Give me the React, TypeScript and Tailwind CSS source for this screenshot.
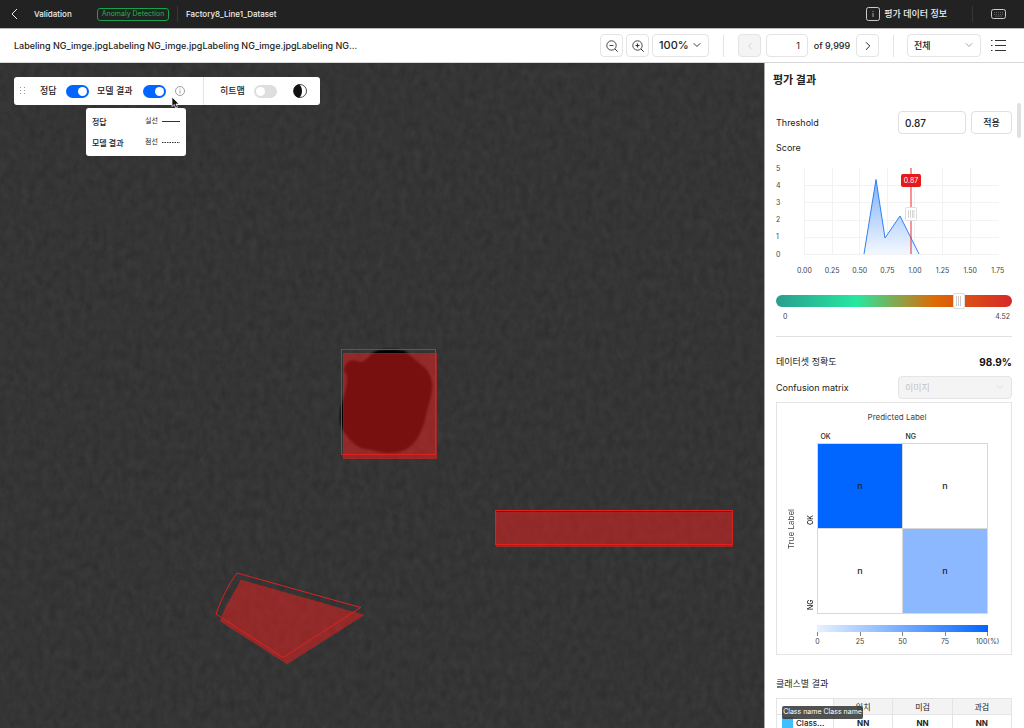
import { useState } from 'react';
import type { ReactNode } from 'react';
import { ChevronDown, ChevronLeft, ChevronRight } from 'lucide-react';

const xTicks = ['0.00', '0.25', '0.50', '0.75', '1.00', '1.25', '1.50', '1.75'];
const yTicks = [5, 4, 3, 2, 1, 0];
const scaleTicks = ['0', '25', '50', '75', '100(%)'];

const matrixRows = [
  { label: 'OK', cells: ['bg-[#0066ff]', 'bg-white'] },
  { label: 'NG', cells: ['bg-white', 'bg-[#8cb8ff]'] }
];

const classRows = [
  { name: 'Class name Class name', short: 'Class...', values: ['NN', 'NN', 'NN'] }
];

function Toggle({ id, checked, onChange }: { id: string; checked: boolean; onChange: (v: boolean) => void }) {
  return (
    <input
      id={id}
      type="checkbox"
      role="switch"
      checked={checked}
      onChange={(e) => onChange(e.target.checked)}
      className="flex h-[13px] w-[23px] shrink-0 appearance-none items-center justify-start rounded-full bg-[#dedede] px-0.5 before:block before:h-[9px] before:w-[9px] before:rounded-full before:bg-white checked:justify-end checked:bg-[#0066ff]"
    />
  );
}

function SquareButton({ label, disabled, children }: { label: string; disabled?: boolean; children: ReactNode }) {
  return (
    <button
      aria-label={label}
      disabled={disabled}
      className="flex h-[23px] w-[23px] shrink-0 items-center justify-center rounded-sm border border-[#e4e4e4] text-[#222] disabled:bg-[#f4f4f4] disabled:text-[#d0d0d0]"
    >
      {children}
    </button>
  );
}

function Magnifier({ plus }: { plus?: boolean }) {
  return (
    <svg width="12" height="12" viewBox="0 0 12 12" fill="none" stroke="#333">
      <circle cx="5.5" cy="5.5" r="4.7" strokeWidth="0.9" />
      <path d="M9 9l2.7 2.7" />
      <path d={plus ? 'M3.5 5.5h4M5.5 3.5v4' : 'M3.5 5.5h4'} strokeWidth={plus ? 1.2 : 0.9} />
    </svg>
  );
}

function TopBar() {
  return (
    <header className="flex h-7 shrink-0 items-center bg-[#222] text-[#eee]">
      <button aria-label="Back" className="ml-[9px] flex w-[11px] justify-center">
        <svg width="7" height="12" viewBox="0 0 7 12" fill="none" stroke="currentColor">
          <path d="M6 1 1 6l5 5" />
        </svg>
      </button>
      <h1 className="ml-[14px] w-[63px] text-[8px] font-medium">Validation</h1>
      <span className="flex h-[13px] w-[72px] items-center justify-center rounded-[3px] border border-[#16a34a] text-[7px] whitespace-nowrap text-[#1fb457]">
        Anomaly Detection
      </span>
      <span className="ml-2 h-4 w-px bg-[#363636]" />
      <span className="ml-2 text-[8px] font-medium">Factory8_Line1_Dataset</span>
      <button className="ml-auto flex items-center gap-1 text-[9px] font-medium">
        <svg width="14" height="14" viewBox="0 0 14 14" fill="none" stroke="#ccc">
          <rect x="0.5" y="0.5" width="13" height="13" rx="2" />
          <path d="M7 6v4M7 4v1" strokeWidth="0.8" />
        </svg>
        평가 데이터 정보
      </button>
      <span className="ml-[25px] h-4 w-px bg-[#363636]" />
      <button aria-label="Keyboard shortcuts" className="mr-[18px] ml-[18px]">
        <svg width="15" height="10" viewBox="0 0 15 10" fill="none" stroke="#ccc">
          <rect x="0.5" y="0.5" width="14" height="9" rx="2" />
          <path d="M3 3.5h9M3 5.5h9" strokeWidth="0.7" strokeDasharray="1 1" opacity="0.5" />
          <path d="M4 7.2h7" strokeWidth="0.6" opacity="0.4" />
        </svg>
      </button>
    </header>
  );
}

function FileBar() {
  return (
    <div className="flex h-[35px] shrink-0 items-center border-y border-t-[#bbb] border-b-[#d8d8d8] bg-white text-[9px] font-medium text-[#222]">
      <span className="ml-[14px] truncate">Labeling NG_imge.jpgLabeling NG_imge.jpgLabeling NG_imge.jpgLabeling NG...</span>
      <div className="ml-auto flex shrink-0 items-center">
        <div className="flex gap-[3px]">
          <SquareButton label="Zoom out">
            <Magnifier />
          </SquareButton>
          <SquareButton label="Zoom in">
            <Magnifier plus />
          </SquareButton>
          <div className="relative h-[23px] w-[57px]">
            <select aria-label="Zoom level" className="h-full w-full appearance-none rounded-sm border border-[#e4e4e4] pl-1.5 text-[11px]">
              <option>100%</option>
            </select>
            <ChevronDown size={12} strokeWidth={1.8} className="pointer-events-none absolute top-[5px] right-[6px]" />
          </div>
        </div>
        <span className="mx-[14px] h-[22px] w-px bg-[#e4e4e4]" />
        <div className="flex items-center gap-[5px]">
          <SquareButton label="Previous image" disabled>
            <ChevronLeft size={12} strokeWidth={1.7} />
          </SquareButton>
          <input aria-label="Image number" defaultValue="1" className="h-[23px] w-[42px] rounded-sm border border-[#e4e4e4] px-[7px] text-right font-normal" />
          <span className="w-[38px] text-center whitespace-nowrap">of 9,999</span>
          <SquareButton label="Next image">
            <ChevronRight size={14} strokeWidth={1.7} />
          </SquareButton>
        </div>
        <span className="mr-[13px] ml-[14px] h-[22px] w-px bg-[#e4e4e4]" />
        <div className="relative h-[23px] w-[74px]">
          <select aria-label="Filter" className="h-full w-full appearance-none rounded-sm border border-[#e4e4e4] pl-1.5">
            <option>전체</option>
          </select>
          <ChevronDown size={12} strokeWidth={1.3} className="pointer-events-none absolute top-[5px] right-[6px] text-[#777]" />
        </div>
        <button aria-label="Image list" className="mr-[18px] ml-[10px]">
          <svg width="15" height="11" viewBox="0 0 15 11" stroke="#333">
            <path d="M4 .5h11M4 5.5h11M4 10.5h11M0 .5h1.5M0 5.5h1.5M0 10.5h1.5" />
          </svg>
        </button>
      </div>
    </div>
  );
}

function Annotations() {
  return (
    <svg className="absolute inset-0 h-full w-full" viewBox="0 63 764 665" preserveAspectRatio="xMidYMid slice">
      <defs>
        <filter id="fabric" x="0" y="0" width="100%" height="100%" colorInterpolationFilters="sRGB">
          <feTurbulence type="fractalNoise" baseFrequency="0.14 0.1" numOctaves="3" seed="4" />
          <feColorMatrix values="0.05 0.03 0 0 0.166  0.05 0.03 0 0 0.166  0.05 0.03 0 0 0.166  0 0 0 0 1" />
        </filter>
        <filter id="soft">
          <feGaussianBlur stdDeviation="1" />
        </filter>
      </defs>
      <rect y="63" width="764" height="665" filter="url(#fabric)" />
      <path
        d="M349 361c5-2 10 1 13 1 6-3 9-10 17-12 8-1 17-1 26 1 7 6 13 11 19 16 6 6 9 14 8 22-1 10-4 17-6 27-3 11-6 20-13 28-6 6-14 9-24 9-10 0-17-4-25-4-8-2-13-8-18-14-6-6-7-20-5-28 2-10 7-21 6-32-5-4-3-10 2-14z"
        filter="url(#soft)"
      />
      <g fill="#f02020" fillOpacity="0.5" stroke="#e02020" strokeDasharray="1 1">
        <rect x="343.5" y="353.5" width="93" height="105" />
        <rect x="496.5" y="512.5" width="236" height="34" />
        <path d="M241 580 364 615 287 664 220 621 226 607z" strokeOpacity="0.6" />
      </g>
      <g fill="none" stroke="#e02020">
        <rect x="341.5" y="349.5" width="94" height="105" />
        <rect x="495.5" y="510.5" width="237" height="34" />
        <path d="M237 573 360.5 607.5 283 657.5 216 614Q224 591 237 573z" />
      </g>
    </svg>
  );
}

function LayerTools() {
  const [answer, setAnswer] = useState(true);
  const [model, setModel] = useState(true);
  const [heatmap, setHeatmap] = useState(false);

  return (
    <div className="absolute top-[14px] left-[14px] flex h-7 w-[306px] items-center rounded-[3px] bg-white text-[9px] font-medium text-[#222]">
      <svg width="5" height="8" viewBox="0 0 5 8" fill="#999" className="ml-1.5">
        <path d="M0 0h1v1H0zM4 0h1v1H4zM0 3h1v1H0zM4 3h1v1H4zM0 6h1v1H0zM4 6h1v1H4z" />
      </svg>
      <label htmlFor="answer" className="ml-[15px] w-[26px]">정답</label>
      <Toggle id="answer" checked={answer} onChange={setAnswer} />
      <label htmlFor="model" className="ml-2 w-[46px]">모델 결과</label>
      <Toggle id="model" checked={model} onChange={setModel} />
      <button aria-label="Line style info" className="ml-[9px]">
        <svg width="10" height="10" viewBox="0 0 10 10" fill="none" stroke="#888" strokeWidth="0.8">
          <circle cx="5" cy="5" r="4.5" />
          <path d="M5 4.3v3.2M5 2.5v1" />
        </svg>
      </button>
      <span className="ml-[18px] h-full w-px bg-[#e4e4e4]" />
      <label htmlFor="heatmap" className="ml-4 w-[34px]">히트맵</label>
      <Toggle id="heatmap" checked={heatmap} onChange={setHeatmap} />
      <button aria-label="Contrast" className="ml-4">
        <svg width="14" height="14" viewBox="0 0 14 14">
          <circle cx="7" cy="7" r="6.5" fill="#fff" stroke="#222" strokeWidth="0.8" />
          <path d="M6 0.2a7 7 0 0 0 0 13.600c4-3 4-10.600 0-13.600z" fill="#111" />
        </svg>
      </button>

      {/* Line style legend */}
      <dl className="absolute top-[31px] left-[72px] flex h-12 w-[100px] flex-col justify-around rounded-[3px] bg-white px-1.5 py-[3px] text-[8px]">
        <div className="flex items-center justify-between">
          <dt>정답</dt>
          <dd className="flex items-center gap-1 text-[7px] font-normal">
            실선
            <svg width="18" height="1" viewBox="0 0 18 1" stroke="#333">
              <path d="M0 .5h18" />
            </svg>
          </dd>
        </div>
        <div className="flex items-center justify-between">
          <dt>모델 결과</dt>
          <dd className="flex items-center gap-1 text-[7px] font-normal">
            점선
            <svg width="18" height="1" viewBox="0 0 18 1" stroke="#333">
              <path d="M0 .5h18" strokeDasharray="1.5 1" />
            </svg>
          </dd>
        </div>
      </dl>
      <svg width="9" height="13" viewBox="0 0 9 13" className="absolute top-[19px] left-[157px]">
        <path d="M1 1v9.5l2.3-2 1.4 3.5 1.8-.7L5 8h3z" fill="#111" stroke="#fff" strokeWidth="0.7" />
      </svg>
    </div>
  );
}

function ScoreChart() {
  return (
    <svg viewBox="0 0 236 116" className="mt-1.5 block w-full" fontSize="7" fill="#444">
      <defs>
        <linearGradient id="area" x1="0" y1="0" x2="0" y2="1">
          <stop offset="0" stopColor="#7fb0fb" />
          <stop offset="1" stopColor="#f3f8ff" />
        </linearGradient>
      </defs>
      <g stroke="#f2f2f2">
        {yTicks.slice(1).map((t) => (
          <path key={t} d={`M28 ${Math.round(92 - t * 17.2) + 0.5}H223`} />
        ))}
        {xTicks.slice(0, 7).map((t, i) => (
          <path key={t} d={`M${Math.round(28 + i * 27.6) + 0.5} 6V92`} />
        ))}
      </g>
      {yTicks.map((t) => (
        <text key={t} x="0" y={94.5 - t * 17.2}>{t}</text>
      ))}
      {xTicks.map((t, i) => (
        <text key={t} x={28.5 + i * 27.6} y="111" textAnchor="middle">{t}</text>
      ))}
      <path d="M88 92 100 17.5 109 76 124 54 143 92z" fill="url(#area)" />
      <path d="M88 92 100 17.5 109 76 124 54 143 92" fill="none" stroke="#2f80f5" />
      <path d="M135 6V92" stroke="#ea2a2a" />
      <rect x="125" y="12" width="20" height="13" rx="2" fill="#e61919" />
      <text x="135" y="21" fill="#fff" textAnchor="middle">0.87</text>
      <rect x="129.5" y="45.5" width="11" height="13" rx="1" fill="#fff" stroke="#ddd" />
      <path d="M132.5 48v8M134.5 48v8M136.5 48v8M138 48v8" stroke="#ccc" strokeWidth="0.8" />
    </svg>
  );
}

function ConfusionMatrix() {
  return (
    <div className="mt-[3px] border border-[#e4e4e4] pt-2 text-[#222]">
      <p className="pl-1.5 text-center text-[8px] leading-3 text-[#444]">Predicted Label</p>
      <div className="mt-2 flex items-center pl-2">
        <span className="mt-3 w-[20px] rotate-180 text-[8px] whitespace-nowrap text-[#444] [writing-mode:vertical-rl]">
          <span className="block w-3 leading-3">True Label</span>
        </span>
        <table className="border-collapse text-[7px] font-medium">
          <thead>
            <tr className="h-3">
              <td className="w-3 p-0" />
              <th scope="col" className="p-0 pl-[3px] text-left leading-3 font-medium">OK</th>
              <th scope="col" className="p-0 pl-[3px] text-left leading-3 font-medium">NG</th>
            </tr>
          </thead>
          <tbody>
            {matrixRows.map((row) => (
              <tr key={row.label} className="h-[85px]">
                <th scope="row" className="w-3 p-0 align-bottom font-medium">
                  <span className="mb-[3px] block h-3 w-3 rotate-180 leading-3 [writing-mode:vertical-rl]">{row.label}</span>
                </th>
                {row.cells.map((color, i) => (
                  <td key={i} className={`w-[85px] border border-[#d8d8d8] p-0 text-center text-[9px] ${color}`}>n</td>
                ))}
              </tr>
            ))}
          </tbody>
        </table>
      </div>
      <svg viewBox="0 0 234 40" className="block w-full" fontSize="7" fill="#444">
        <defs>
          <linearGradient id="scale">
            <stop offset="0" stopColor="#e8f1ff" />
            <stop offset="1" stopColor="#0066ff" />
          </linearGradient>
        </defs>
        <rect x="40" y="11" width="171" height="7" fill="url(#scale)" />
        {scaleTicks.map((t, i) => (
          <g key={t}>
            <path d={`M${Math.round(40 + i * 42.5) + 0.5} 18v4`} stroke="#888" />
            <text x={40.5 + i * 42.5} y="30" textAnchor="middle">{t}</text>
          </g>
        ))}
      </svg>
    </div>
  );
}

function ResultPanel() {
  const [score, setScore] = useState(3.58);

  return (
    <aside className="relative w-[260px] shrink-0 overflow-hidden border-l border-[#aaa] bg-white pr-3 pl-[11px] text-[9px] text-[#222]">
      <h2 className="-ml-[3px] pt-[9px] text-[11px] leading-4 font-bold">평가 결과</h2>

      <div className="mt-[23px] flex items-center">
        <label htmlFor="threshold">Threshold</label>
        <input id="threshold" defaultValue="0.87" className="ml-auto h-[23px] w-[68px] rounded-sm border border-[#e0e0e0] px-1.5 text-[10px] font-medium" />
        <button className="ml-[5px] h-[23px] w-[41px] rounded-sm border border-[#e0e0e0] font-medium">적용</button>
      </div>
      <h3 className="mt-1.5 leading-4">Score</h3>
      <ScoreChart />

      <input
        aria-label="Score threshold"
        type="range"
        min="0"
        max="4.52"
        step="0.01"
        value={score}
        onChange={(e) => setScore(Number(e.target.value))}
        className="mt-[17px] block h-3 w-full appearance-none rounded-full bg-[linear-gradient(90deg,#2a9d8f_0%,#26e8a0_34%,#dd6b05_67%,#d62828_100%)] [&::-webkit-slider-thumb]:h-4 [&::-webkit-slider-thumb]:w-3 [&::-webkit-slider-thumb]:appearance-none [&::-webkit-slider-thumb]:rounded-xs [&::-webkit-slider-thumb]:border [&::-webkit-slider-thumb]:border-[#ddd] [&::-webkit-slider-thumb]:bg-white [&::-webkit-slider-thumb]:bg-[repeating-linear-gradient(90deg,#ccc_0_1px,#fff_1px_2px)] [&::-webkit-slider-thumb]:bg-size-[6px_10px] [&::-webkit-slider-thumb]:bg-center [&::-webkit-slider-thumb]:bg-no-repeat"
      />
      <div className="mt-1 flex justify-between pr-0.5 pl-[7px] text-[7px] leading-3 text-[#444]">
        <span>0</span>
        <span>4.52</span>
      </div>
      <hr className="mt-[13px] border-[#e0e0e0]" />

      <div className="mt-[17px] flex items-center justify-between leading-4">
        <h3>데이터셋 정확도</h3>
        <strong className="text-[10px] text-[#111]">98.9%</strong>
      </div>
      <div className="mt-1.5 flex items-center justify-between">
        <label htmlFor="matrix-unit">Confusion matrix</label>
        <div className="relative h-[23px] w-[114px]">
          <select
            id="matrix-unit"
            disabled
            className="h-full w-full appearance-none rounded-sm border border-[#e4e4e4] bg-[#f4f4f4] pl-1.5 text-[#c4c4c4] opacity-100"
          >
            <option>이미지</option>
          </select>
          <ChevronDown size={12} strokeWidth={1.5} className="pointer-events-none absolute top-[5px] right-[6px] text-[#d8d8d8]" />
        </div>
      </div>
      <ConfusionMatrix />

      <h3 className="mt-[21px] leading-4">클래스별 결과</h3>
      <div className="relative mt-1.5">
        <table className="w-full table-fixed border-collapse text-center text-[8px]">
          <thead>
            <tr className="h-4">
              <td className="w-[57px] border border-[#e4e4e4]" />
              {['일치', '미검', '과검'].map((h) => (
                <th key={h} scope="col" className="border border-[#e4e4e4] bg-[#f3f3f3] p-0 leading-3 font-normal">{h}</th>
              ))}
            </tr>
          </thead>
          <tbody>
            {classRows.map((row, i) => (
              <tr key={i} className="h-4">
                <th scope="row" title={row.name} className="border border-[#e4e4e4] p-0 leading-3 font-medium">
                  <span className="flex items-center gap-[3px] pl-[5px]">
                    <span className="h-[11px] w-[11px] bg-[#40bfff]" />
                    {row.short}
                  </span>
                </th>
                {row.values.map((v, j) => (
                  <td key={j} className="border border-[#e4e4e4] p-0 leading-3 font-bold">{v}</td>
                ))}
              </tr>
            ))}
          </tbody>
        </table>
        <span role="tooltip" className="absolute top-2 left-1.5 flex h-[13px] w-[81px] items-center justify-center rounded-xs bg-[#333]/85 text-[7px] whitespace-nowrap text-white">
          Class name Class name
        </span>
      </div>

      {/* Scroll thumb */}
      <span className="absolute top-10 right-[3px] h-[35px] w-1 rounded-full bg-[#e0e0e0]" />
    </aside>
  );
}

export default function App() {
  return (
    <div className="flex h-screen flex-col overflow-hidden bg-white font-['Inter','Noto_Sans_CJK_KR',sans-serif]">
      <TopBar />
      <FileBar />
      <div className="flex min-h-0 flex-1">
        <main className="relative min-w-0 flex-1 overflow-hidden bg-[#343434]">
          <Annotations />
          <LayerTools />
        </main>
        <ResultPanel />
      </div>
    </div>
  );
}
